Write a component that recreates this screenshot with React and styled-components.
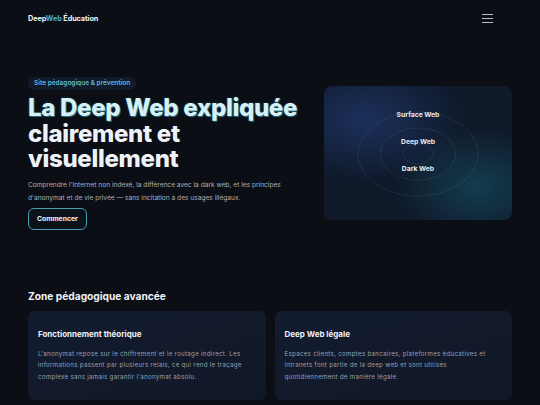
import React from 'react';
import styled, { createGlobalStyle } from 'styled-components';

const GlobalStyle = createGlobalStyle`
  html, body {
    margin: 0;
    padding: 0;
    background: #0b0e15;
  }
  body {
    font-family: Inter, "Noto Sans", sans-serif;
    color: #e8edf4;
    -webkit-font-smoothing: antialiased;
  }
`;

const Page = styled.div`
  width: 540px;
  min-height: 405px;
  padding: 0 28px;
  box-sizing: border-box;
  background: #0b0e15;
  overflow: hidden;
`;

const Header = styled.header`
  height: 37px;
  display: flex;
  align-items: center;
  justify-content: space-between;
`;

const Logo = styled.div`
  font-size: 7.3px;
  font-weight: 700;
  letter-spacing: -0.1px;
  color: #f1f4f8;

  span {
    color: #4aaed6;
  }
`;

const Burger = styled.button`
  display: flex;
  flex-direction: column;
  gap: 3px;
  width: 11px;
  padding: 0;
  margin-right: 19px;
  background: none;
  border: 0;

  i {
    display: block;
    height: 1px;
    background: #b9bec7;
  }
`;

const Hero = styled.section`
  display: grid;
  grid-template-columns: 272px 188px;
  justify-content: space-between;
  align-items: center;
  padding-top: 40px;
`;

const Intro = styled.div`
  display: flex;
  flex-direction: column;
  align-items: flex-start;
`;

const Badge = styled.span`
  display: inline-block;
  padding: 3px 6px;
  border-radius: 999px;
  background: #111b2a;
  color: #5fb7dc;
  font-size: 6.5px;
  font-weight: 600;
  line-height: 7px;
`;

const Title = styled.h1`
  margin: 5px 0 0;
  font-size: 24px;
  line-height: 25.5px;
  font-weight: 800;
  letter-spacing: -0.3px;
  color: #eef2f7;
  white-space: nowrap;
`;

const TitleLine = styled.span`
  display: block;
  color: ${p => (p.$glow ? '#d6f1f5' : '#eef2f7')};
  text-shadow: ${p =>
    p.$glow ? '1px 1px 0 rgba(76, 200, 230, 0.45), 0 0 3px rgba(80, 200, 235, 0.25)' : 'none'};
`;

const Lead = styled.p`
  margin: 7px 0 0;
  font-size: 6.6px;
  line-height: 13px;
  color: #a9b1bd;
  width: 268px;
`;

const CTA = styled.button`
  margin-top: 3px;
  height: 22px;
  padding: 0 8px;
  border-radius: 6px;
  border: 1px solid #4b9db3;
  background: #0c121a;
  color: #f3f5f8;
  font-family: inherit;
  font-size: 6.8px;
  font-weight: 700;
`;

const Visual = styled.div`
  position: relative;
  height: 134px;
  border-radius: 8px;
  background:
    radial-gradient(ellipse 75% 65% at 22% 25%, rgba(32, 56, 108, 0.75), transparent 72%),
    radial-gradient(ellipse 60% 60% at 82% 75%, rgba(20, 80, 98, 0.65), transparent 75%),
    #0f192a;
  overflow: hidden;
`;

const Rings = styled.svg`
  position: absolute;
  inset: 0;
  width: 100%;
  height: 100%;
`;

const Layers = styled.div`
  position: absolute;
  inset: 0;
  display: flex;
  flex-direction: column;
  align-items: center;
  padding-top: 24px;
  gap: 17px;
`;

const LayerLabel = styled.span`
  font-size: 6.8px;
  font-weight: 700;
  line-height: 10px;
  color: #e8ecf2;
`;

const Section = styled.section`
  margin-top: 60px;
`;

const SectionTitle = styled.h2`
  margin: 0;
  font-size: 10.2px;
  line-height: 12px;
  font-weight: 700;
  color: #eef1f6;
`;

const Cards = styled.div`
  display: grid;
  grid-template-columns: 1fr 1fr;
  gap: 9px;
  margin-top: 9px;
`;

const Card = styled.article`
  height: 89px;
  box-sizing: border-box;
  padding: 18px 10px 0;
  border-radius: 7px;
  background: linear-gradient(160deg, #131c2f, #101728);
`;

const CardTitle = styled.h3`
  margin: 0;
  font-size: 8px;
  line-height: 10px;
  font-weight: 700;
  color: #eef1f6;
`;

const CardText = styled.p`
  margin: 9px 0 0;
  font-size: 6.15px;
  letter-spacing: 0.3px;
  line-height: 11.6px;
  color: #98a1b0;
`;

const layers = ['Surface Web', 'Deep Web', 'Dark Web'];

const cards = [
  {
    title: 'Fonctionnement théorique',
    text: "L'anonymat repose sur le chiffrement et le routage indirect. Les informations passent par plusieurs relais, ce qui rend le traçage complexe sans jamais garantir l'anonymat absolu."
  },
  {
    title: 'Deep Web légale',
    text: 'Espaces clients, comptes bancaires, plateformes éducatives et intranets font partie de la deep web et sont utilisés quotidiennement de manière légale.'
  }
];

const App = () => (
  <Page>
    <GlobalStyle />
    <Header>
      <Logo>
        Deep<span>Web</span> Éducation
      </Logo>
      <Burger aria-label="Menu">
        <i />
        <i />
        <i />
      </Burger>
    </Header>

    <Hero>
      <Intro>
        <Badge>Site pédagogique &amp; prévention</Badge>
        <Title>
          <TitleLine $glow>La Deep Web expliquée</TitleLine>
          <TitleLine>clairement et</TitleLine>
          <TitleLine>visuellement</TitleLine>
        </Title>
        <Lead>
          Comprendre l'Internet non indexé, la différence avec la dark web, et les principes
          d'anonymat et de vie privée — sans incitation à des usages illégaux.
        </Lead>
        <CTA>Commencer</CTA>
      </Intro>

      <Visual>
        <Rings viewBox="0 0 188 134">
          <g fill="none" stroke="rgba(160,190,210,0.35)" strokeWidth="0.6" strokeDasharray="1.5 1.5">
            <ellipse cx="94" cy="68" rx="60" ry="42" />
            <ellipse cx="94" cy="68" rx="37.5" ry="26" />
            <ellipse cx="94" cy="68" rx="15" ry="10" />
          </g>
        </Rings>
        <Layers>
          {layers.map(l => (
            <LayerLabel key={l}>{l}</LayerLabel>
          ))}
        </Layers>
      </Visual>
    </Hero>

    <Section>
      <SectionTitle>Zone pédagogique avancée</SectionTitle>
      <Cards>
        {cards.map(c => (
          <Card key={c.title}>
            <CardTitle>{c.title}</CardTitle>
            <CardText>{c.text}</CardText>
          </Card>
        ))}
      </Cards>
    </Section>
  </Page>
);

export default App;
